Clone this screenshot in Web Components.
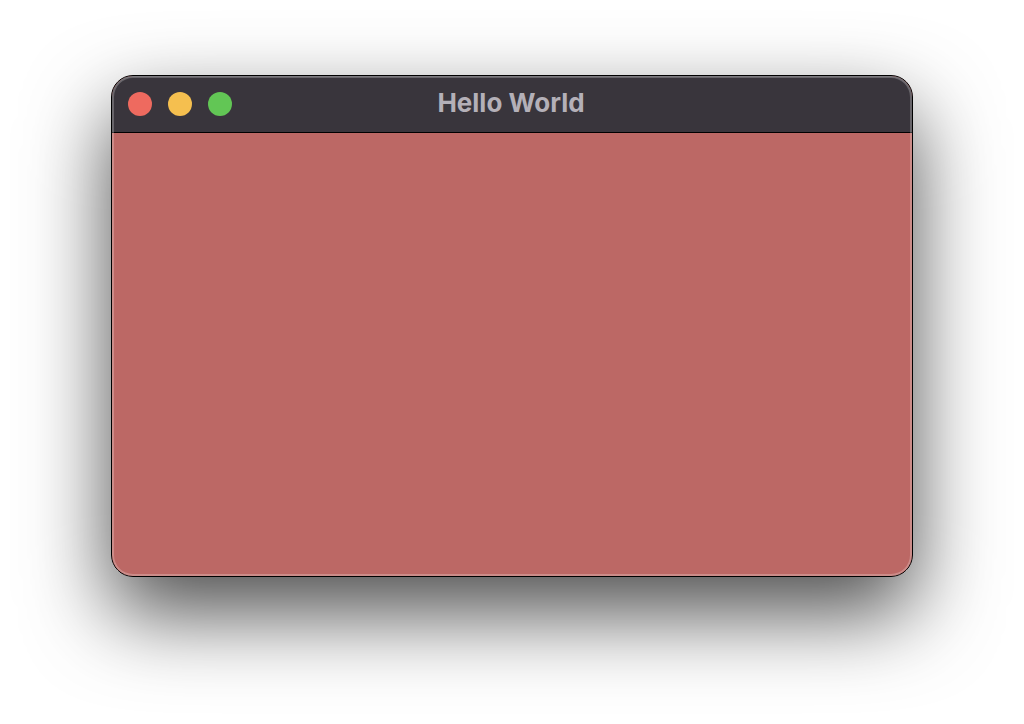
<!DOCTYPE html>
<html lang="en">
<head>
<meta charset="utf-8">
<meta name="viewport" content="width=device-width, initial-scale=1">
<title>Hello World</title>
<style>
  body { margin: 0; background: #fff; font-family: Inter, "Liberation Sans", sans-serif; }
</style>
</head>
<body>
<desktop-stage>
  <app-window>
    <title-bar slot="bar">Hello World</title-bar>
  </app-window>
</desktop-stage>
<script>
  class ShadowElement extends HTMLElement {
    constructor() {
      super();
      this.attachShadow({ mode: "open" }).innerHTML = this.constructor.markup;
    }
  }

  class DesktopStage extends ShadowElement {
    static markup = `
      <style>
        :host { display: flex; box-sizing: border-box; min-height: 100vh; padding: 75px 111px 147px; overflow: hidden; }
        ::slotted(*) { flex: 1; min-width: 0; }
      </style>
      <slot></slot>`;
  }

  class AppWindow extends ShadowElement {
    static markup = `
      <style>
        :host { display: flex; border-radius: 22px; box-shadow: 0 36px 84px rgba(0, 0, 0, .7); }
        section {
          flex: 1; display: flex; flex-direction: column; position: relative;
          border: 1px solid #000; border-radius: 22px; overflow: hidden;
          background: #bc6865;
        }
        main { flex: 1; }
        /* light rim drawn over both the bar and the content */
        section::after {
          content: ""; position: absolute; inset: 0; border-radius: 21px; pointer-events: none;
          box-shadow: inset 0 0 0 2px rgba(255, 255, 255, .24), inset 0 1px 0 rgba(255, 255, 255, .14);
        }
      </style>
      <section aria-label="Hello World">
        <slot name="bar"></slot>
        <main><slot></slot></main>
      </section>`;
  }

  class TitleBar extends ShadowElement {
    static markup = `
      <style>
        :host { display: block; }
        header {
          display: grid; grid-template-columns: 1fr auto 1fr; align-items: center;
          height: 56px; padding: 0 16px; background: #39353c; border-bottom: 1px solid #000;
        }
        .lights { display: flex; gap: 16px; }
        h1 { margin: 0; padding: 0 2px 2px 0; font-size: 26px; line-height: 32px; font-weight: 700; color: #b4b0b8; white-space: nowrap; }
      </style>
      <header>
        <div class="lights">
          <window-light style="--light: #ee6a5f" label="Close"></window-light>
          <window-light style="--light: #f5bf4f" label="Minimize"></window-light>
          <window-light style="--light: #62c655" label="Zoom"></window-light>
        </div>
        <h1><slot></slot></h1>
      </header>`;
  }

  class WindowLight extends ShadowElement {
    static markup = `
      <style>
        :host { display: block; }
        button { display: block; width: 24px; height: 24px; padding: 0; border: 0; border-radius: 50%; background: var(--light); }
      </style>
      <button type="button"></button>`;
    connectedCallback() {
      this.shadowRoot.querySelector("button").setAttribute("aria-label", this.getAttribute("label"));
    }
  }

  customElements.define("window-light", WindowLight);
  customElements.define("title-bar", TitleBar);
  customElements.define("app-window", AppWindow);
  customElements.define("desktop-stage", DesktopStage);
</script>
</body>
</html>
